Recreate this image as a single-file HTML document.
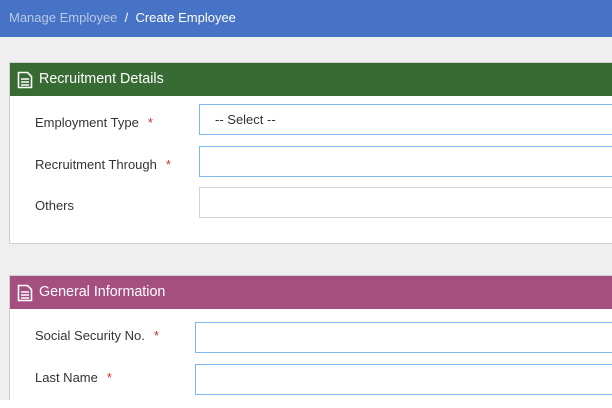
<!DOCTYPE html>
<html><head><style>
*{margin:0;padding:0;box-sizing:border-box}
body{width:612px;height:408px;overflow:hidden;background:#fff;font-family:"Liberation Sans",sans-serif;position:relative}
.bg{position:absolute;left:0;top:0;width:612px;height:400px;background:#efefef}
.top{position:absolute;left:0;top:0;width:612px;height:37px;background:#4673c5;color:#fff;font-size:13px;line-height:36px;padding-left:9px}
.top .m{color:#b9c8e6}
.panel{position:absolute;left:9px;width:620px;background:#fff;border:1px solid #d0d0d0}
.hd{height:33px;color:#fff;font-size:14.3px;line-height:33px;padding-left:29px;position:relative}
.hd svg{position:absolute;left:7px;top:8px}
.lab{position:absolute;left:25px;font-size:13px;color:#333}
.lab b{color:#c9302c;font-weight:normal;margin-left:9px}
.in{position:absolute;height:31px;width:500px;border:1px solid #7fb8f0;background:#fff;font-size:13px;color:#333;line-height:29px;padding-left:15px}
.in.g{border-color:#d4d4d4}
</style></head><body>
<div class="bg"></div>
<div class="top"><span class="m">Manage Employee</span>&nbsp; / &nbsp;Create Employee</div>
<div class="panel" style="top:62px;height:182px">
<div class="hd" style="background:#386b34"><svg width="16" height="18" viewBox="0 0 16 18"><path d="M1.5 1.5h9l4 4v11h-13z" fill="none" stroke="#fff" stroke-width="1.6"/><path d="M4 8h8M4 11h8M4 14h8" stroke="#fff" stroke-width="1.4"/></svg>Recruitment Details</div>
<div class="lab" style="top:52px">Employment Type<b>*</b></div>
<div class="lab" style="top:94px">Recruitment Through<b>*</b></div>
<div class="lab" style="top:135px">Others</div>
<div class="in" style="left:189px;top:41px">-- Select --</div>
<div class="in" style="left:189px;top:83px"></div>
<div class="in g" style="left:189px;top:124px"></div>
</div>
<div class="panel" style="top:275px;height:125px;border-bottom:none">
<div class="hd" style="background:#a54e80"><svg width="16" height="18" viewBox="0 0 16 18"><path d="M1.5 1.5h9l4 4v11h-13z" fill="none" stroke="#fff" stroke-width="1.6"/><path d="M4 8h8M4 11h8M4 14h8" stroke="#fff" stroke-width="1.4"/></svg>General Information</div>
<div class="lab" style="top:52px">Social Security No.<b>*</b></div>
<div class="lab" style="top:94px">Last Name<b>*</b></div>
<div class="in" style="left:185px;top:46px"></div>
<div class="in" style="left:185px;top:88px"></div>
</div>
</body></html>
